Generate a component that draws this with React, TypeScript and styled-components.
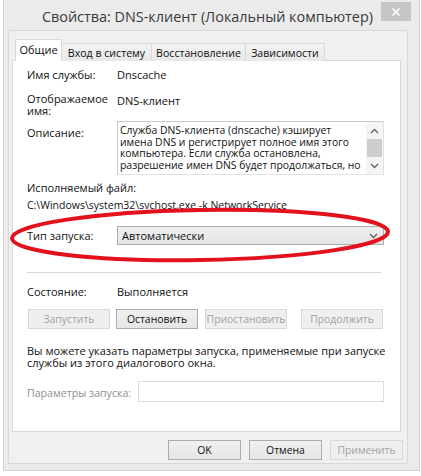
import React from "react";
import styled, { createGlobalStyle, css } from "styled-components";

const GlobalStyle = createGlobalStyle`
  html, body { margin: 0; padding: 0; background: #ffffff; }
  body {
    font-family: "Open Sans", "Noto Sans", sans-serif;
    font-size: 11px;
    color: #111111;
  }
  * { box-sizing: border-box; }
`;

const Screen = styled.div`
  position: relative;
  width: 421px;
  height: 476px;
  overflow: hidden;
  background: #ffffff;
`;

const Frame = styled.div`
  margin-left: 3px;
  width: 417px;
  height: 471px;
  background: #ebebeb;
  border: 1px solid #d2d2d2;
  border-top: none;
  padding: 0 11px 6px 4px;
  display: flex;
  flex-direction: column;
`;

const TitleBar = styled.div`
  height: 30px;
  display: grid;
  grid-template-columns: 30px 1fr 30px;
  margin-right: -3px;
`;

const Title = styled.div`
  grid-column: 2;
  justify-self: center;
  padding-top: 7px;
  padding-right: 4px;
  font-size: 14.4px;
  line-height: 20px;
  color: #3a3a3a;
  white-space: nowrap;
`;

const CloseButton = styled.div`
  grid-column: 3;
  margin-top: 2px;
  width: 30px;
  height: 19px;
  background: #c6c6c6;
  display: flex;
  align-items: center;
  justify-content: center;
`;

const Client = styled.div`
  flex: 1;
  background: #f0f0f0;
  border: 1px solid #d8d8d8;
  padding: 8px 6px 0 3px;
  display: flex;
  flex-direction: column;
`;

const TabStrip = styled.div`
  display: flex;
  align-items: flex-end;
  padding-left: 3px;
  height: 22px;
  margin-bottom: -1px;
  position: relative;
  z-index: 1;
`;

const Tab = styled.div<{ $active?: boolean; $w: number }>`
  width: ${(p) => p.$w}px;
  height: 18px;
  margin-left: -1px;
  border: 1px solid #d9d9d9;
  border-bottom: none;
  background: linear-gradient(#f2f2f2, #e8e8e8);
  display: flex;
  align-items: center;
  justify-content: center;
  font-size: 10.6px;
  line-height: 12px;
  white-space: nowrap;
  ${(p) =>
    p.$active &&
    css`
      height: 22px;
      margin-left: 0;
      background: #ffffff;
      padding-bottom: 1px;
      font-size: 11px;
    `}
`;

const Panel = styled.div`
  height: 372px;
  background: #ffffff;
  border: 1px solid #d9d9d9;
  padding: 7px 16px 0 14px;
  display: flex;
  flex-direction: column;
`;

const Row = styled.div<{ $mt: number }>`
  display: grid;
  grid-template-columns: 90px 1fr;
  align-items: start;
  margin-top: ${(p) => p.$mt}px;
  line-height: 12px;
`;

const CenterRow = styled(Row)`
  align-items: center;
`;

const Label = styled.div<{ $pt?: number }>`
  padding-top: ${(p) => p.$pt ?? 0}px;
  white-space: pre;
`;

const Value = styled.div<{ $pt?: number }>`
  padding-top: ${(p) => p.$pt ?? 0}px;
  white-space: nowrap;
`;

const Line = styled.div<{ $mt: number; $size?: number }>`
  margin-top: ${(p) => p.$mt}px;
  font-size: ${(p) => p.$size ?? 11}px;
  line-height: 12px;
  white-space: pre;
`;

const DescBox = styled.div`
  height: 54px;
  border: 1px solid #c9c9c9;
  border-right-color: #e2e2e2;
  border-bottom-color: #e2e2e2;
  display: flex;
  background: #ffffff;
`;

const DescText = styled.div`
  flex: 1;
  padding: 3px 0 0 2px;
  font-size: 10.4px;
  line-height: 11.5px;
  white-space: pre;
  overflow: hidden;
`;

const ScrollBar = styled.div`
  width: 17px;
  display: flex;
  flex-direction: column;
  background: #f5f5f5;
`;

const ScrollArrow = styled.div`
  height: 17px;
  display: flex;
  align-items: center;
  justify-content: center;
`;

const ScrollThumb = styled.div`
  height: 18px;
  margin: 0 1px;
  background: #cdcdcd;
`;

const Combo = styled.div`
  height: 19px;
  border: 1px solid #acacac;
  background: linear-gradient(#f0f0f0, #e5e5e5);
  display: flex;
  align-items: center;
  justify-content: space-between;
  padding: 0 5px 0 4px;
`;

const Separator = styled.div`
  margin-top: 27px;
  margin-right: 3px;
  height: 1px;
  background: #d5d5d5;
`;

const ButtonRow = styled.div`
  display: flex;
  gap: 6px;
  margin-top: 11px;
  padding-left: 1px;
`;

const Button = styled.div<{ $disabled?: boolean; $w?: number; $ml?: number }>`
  width: ${(p) => p.$w ?? 82}px;
  height: 20px;
  margin-left: ${(p) => p.$ml ?? 0}px;
  display: flex;
  align-items: center;
  justify-content: center;
  border: 1px solid #acacac;
  background: linear-gradient(#f0f0f0, #e5e5e5);
  font-size: 10.4px;
  white-space: nowrap;
  ${(p) =>
    p.$disabled &&
    css`
      border-color: #d9d9d9;
      background: #efefef;
      color: #a3a3a3;
    `}
`;

const ParamRow = styled.div`
  display: flex;
  align-items: center;
  margin-top: 12px;
  gap: 4px;
`;

const ParamLabel = styled.div`
  width: 107px;
  color: #8e8e8e;
  font-size: 10.6px;
  white-space: nowrap;
  padding-top: 2px;
`;

const ParamInput = styled.div`
  flex: 1;
  height: 21px;
  border: 1px solid #dcdcdc;
  background: #ffffff;
`;

const Footer = styled.div`
  display: flex;
  justify-content: flex-end;
  gap: 8px;
  margin-top: 8px;
  margin-right: -2px;
`;

const Overlay = styled.svg`
  position: absolute;
  left: 0;
  top: 0;
  pointer-events: none;
`;

const Chevron = ({ up }: { up?: boolean }) => (
  <svg width="9" height="6" viewBox="0 0 9 6">
    <polyline
      points={up ? "1,5 4.5,1.5 8,5" : "1,1 4.5,4.5 8,1"}
      fill="none"
      stroke="#606060"
      strokeWidth="1.3"
    />
  </svg>
);

const description =
  "Служба DNS-клиента (dnscache) кэширует\nимена DNS и регистрирует полное имя этого\nкомпьютера. Если служба остановлена,\nразрешение имен DNS будет продолжаться, но";

const info =
  "Вы можете указать параметры запуска, применяемые при запуске\nслужбы из этого диалогового окна.";

export default function App() {
  return (
    <Screen>
      <GlobalStyle />
      <Frame>
        <TitleBar>
          <Title>Свойства: DNS-клиент (Локальный компьютер)</Title>
          <CloseButton>
            <svg width="10" height="10" viewBox="0 0 10 10">
              <path d="M1.5 1.5 L8.5 8.5 M8.5 1.5 L1.5 8.5" stroke="#ffffff" strokeWidth="1.6" />
            </svg>
          </CloseButton>
        </TitleBar>
        <Client>
          <TabStrip>
            <Tab $active $w={47}>Общие</Tab>
            <Tab $w={91}>Вход в систему</Tab>
            <Tab $w={95}>Восстановление</Tab>
            <Tab $w={80}>Зависимости</Tab>
          </TabStrip>
          <Panel>
            <Row $mt={1}>
              <Label>Имя службы:</Label>
              <Value>Dnscache</Value>
            </Row>
            <Row $mt={12}>
              <Label>{"Отображаемое\nимя:"}</Label>
              <Value $pt={2}>DNS-клиент</Value>
            </Row>
            <Row $mt={4}>
              <Label $pt={6}>Описание:</Label>
              <DescBox>
                <DescText>{description}</DescText>
                <ScrollBar>
                  <ScrollArrow>
                    <Chevron up />
                  </ScrollArrow>
                  <ScrollThumb />
                  <ScrollArrow>
                    <Chevron />
                  </ScrollArrow>
                </ScrollBar>
              </DescBox>
            </Row>
            <Line $mt={7}>Исполняемый файл:</Line>
            <Line $mt={5} $size={10.5}>C:\Windows\system32\svchost.exe -k NetworkService</Line>
            <CenterRow $mt={15}>
              <Label>Тип запуска:</Label>
              <Combo>
                <span>Автоматически</span>
                <Chevron />
              </Combo>
            </CenterRow>
            <Separator />
            <Row $mt={13}>
              <Label>Состояние:</Label>
              <Value>Выполняется</Value>
            </Row>
            <ButtonRow>
              <Button $disabled>Запустить</Button>
              <Button>Остановить</Button>
              <Button $disabled $ml={1}>Приостановить</Button>
              <Button $disabled $ml={8}>Продолжить</Button>
            </ButtonRow>
            <Line $mt={16}>{info}</Line>
            <ParamRow>
              <ParamLabel>Параметры запуска:</ParamLabel>
              <ParamInput />
            </ParamRow>
          </Panel>
          <Footer>
            <Button $w={73}>OK</Button>
            <Button $w={73}>Отмена</Button>
            <Button $w={73} $disabled>Применить</Button>
          </Footer>
        </Client>
      </Frame>
      <Overlay width="421" height="476" viewBox="0 0 421 476">
        <ellipse
          cx="200"
          cy="235"
          rx="188"
          ry="25"
          transform="rotate(-1 200 235)"
          fill="none"
          stroke="#e2111b"
          strokeWidth="4"
        />
      </Overlay>
    </Screen>
  );
}
